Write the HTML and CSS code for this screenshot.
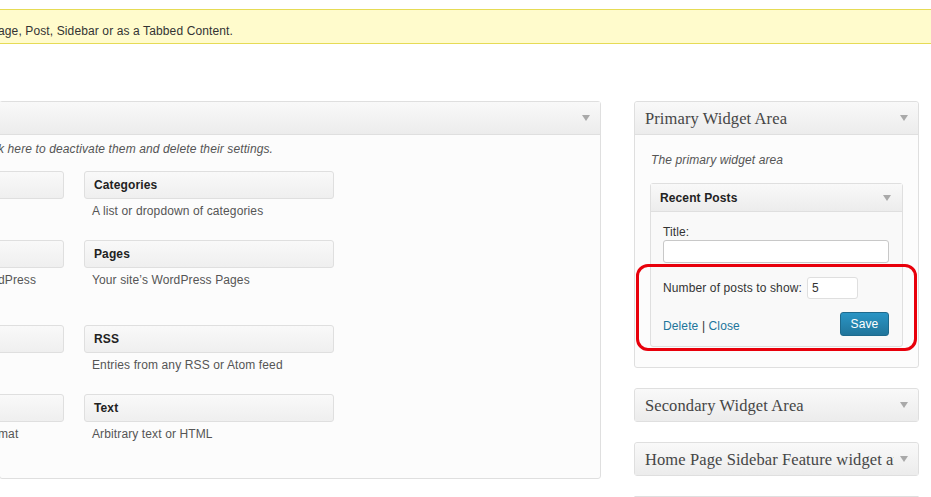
FILE: index.html
```html
<!DOCTYPE html>
<html>
<head>
<meta charset="utf-8">
<link rel="stylesheet" href="styles.css">
</head>
<body>
<div class="notice">age, Post, Sidebar or as a Tabbed Content.</div>
<div class="main">
  <div class="available">
    <div class="panel-head"><span class="arrow"></span></div>
    <div class="available-body">
      <p class="hint">k here to deactivate them and delete their settings.</p>
      <div class="widget-grid">
        <div class="item cut"><div class="wbox"></div></div>
        <div class="item"><div class="wbox">Categories</div><div class="wdesc">A list or dropdown of categories</div></div>
        <div class="item cut tall"><div class="wbox"></div><div class="wdesc">dPress</div></div>
        <div class="item tall"><div class="wbox">Pages</div><div class="wdesc">Your site’s WordPress Pages</div></div>
        <div class="item cut"><div class="wbox"></div></div>
        <div class="item"><div class="wbox">RSS</div><div class="wdesc">Entries from any RSS or Atom feed</div></div>
        <div class="item cut"><div class="wbox"></div><div class="wdesc">mat</div></div>
        <div class="item"><div class="wbox">Text</div><div class="wdesc">Arbitrary text or HTML</div></div>
      </div>
    </div>
  </div>
  <div class="sidebars">
    <div class="sidebar open">
      <div class="sidebar-head"><span class="sidebar-name">Primary Widget Area</span><span class="arrow"></span></div>
      <div class="sidebar-body">
        <p class="sidebar-desc">The primary widget area</p>
        <div class="widget">
          <div class="widget-head"><span>Recent Posts</span><span class="arrow"></span></div>
          <div class="widget-inside">
            <label class="field-label">Title:</label>
            <div class="text-input wide"></div>
            <div class="num-row">
              <span>Number of posts to show:</span>
              <div class="text-input num">5</div>
            </div>
            <div class="actions">
              <span class="links"><a>Delete</a> | <a>Close</a></span>
              <span class="save">Save</span>
            </div>
          </div>
        </div>
        <div class="highlight"></div>
      </div>
    </div>
    <div class="sidebar closed">
      <div class="sidebar-head"><span class="sidebar-name">Secondary Widget Area</span><span class="arrow"></span></div>
    </div>
    <div class="sidebar closed">
      <div class="sidebar-head"><span class="sidebar-name">Home Page Sidebar Feature widget area</span><span class="arrow"></span></div>
    </div>
    <div class="sidebar closed"></div>
  </div>
</div>
</body>
</html>
```
FILE: styles.css
```css
html, body {
  margin: 0;
  padding: 0;
  background: #fff;
}
body {
  width: 931px;
  height: 497px;
  overflow: hidden;
  font-family: "Liberation Sans", Arial, sans-serif;
  font-size: 12px;
  letter-spacing: 0.12px;
  color: #333;
}
.notice {
  margin: 9px -1px 0 -2px;
  height: 18px;
  padding: 12px 0 3px;
  line-height: 18px;
  background: #fffbcc;
  border-top: 1px solid #e6db55;
  border-bottom: 1px solid #e6db55;
  white-space: nowrap;
}
.main {
  display: flex;
  align-items: flex-start;
  margin-top: 57px;
}
.available {
  margin-left: -1px;
  width: 600px;
  border: 1px solid #dfdfdf;
  border-radius: 3px;
  background: #fcfcfc;
  flex: none;
}
.panel-head {
  height: 32px;
  border-bottom: 1px solid #dfdfdf;
  background: linear-gradient(#f9f9f9, #ececec);
  display: flex;
  align-items: center;
  justify-content: flex-end;
  padding-right: 10px;
}
.arrow {
  width: 0;
  height: 0;
  border-left: 4px solid transparent;
  border-right: 4px solid transparent;
  border-top: 6px solid #a9a9a9;
  flex: none;
}
.available-body {
  padding: 5px 0 35px;
}
.hint {
  margin: 0 0 13px -2px;
  line-height: 18px;
  font-style: italic;
  white-space: nowrap;
  color: #555;
}
.widget-grid {
  display: grid;
  grid-template-columns: 64px 250px;
  column-gap: 20px;
  row-gap: 20px;
}
.item.tall {
  margin-bottom: 16px;
}
.wbox {
  height: 26px;
  line-height: 26px;
  border: 1px solid #dfdfdf;
  border-radius: 3px;
  background: linear-gradient(#f9f9f9, #efefef);
  padding-left: 9px;
  font-weight: bold;
  color: #222;
}
.item.cut .wbox {
  margin-left: -12px;
}
.wdesc {
  margin-top: 3px;
  padding-left: 8px;
  line-height: 18px;
  color: #555;
  white-space: nowrap;
}
.item.cut .wdesc {
  padding-left: 0;
  margin-left: -2px;
}
.sidebars {
  margin-left: 33px;
  width: 285px;
  flex: none;
  display: flex;
  flex-direction: column;
  gap: 20px;
}
.sidebar {
  border: 1px solid #dfdfdf;
  border-radius: 3px;
  background: #fcfcfc;
}
.sidebar.closed {
  background: linear-gradient(#f9f9f9, #ececec);
}
.sidebar-head {
  height: 32px;
  display: flex;
  align-items: center;
  padding: 0 10px 0 10px;
  gap: 6px;
  background: linear-gradient(#f9f9f9, #ececec);
  border-radius: 3px 3px 0 0;
}
.sidebar.open .sidebar-head {
  border-bottom: 1px solid #dfdfdf;
}
.sidebar-name {
  flex: 1;
  min-width: 0;
  overflow: hidden;
  white-space: nowrap;
  font-family: "Liberation Serif", "Times New Roman", serif;
  font-size: 16.5px;
  letter-spacing: 0.1px;
  color: #464646;
  padding-top: 2px;
}
.sidebar-body {
  position: relative;
  padding: 16px 15px 20px;
}
.sidebar-desc {
  margin: 0 0 14px 1px;
  line-height: 18px;
  font-style: italic;
  color: #555;
}
.widget {
  border: 1px solid #dfdfdf;
  border-radius: 3px;
  background: #f9f9f9;
}
.widget-head {
  height: 27px;
  display: flex;
  align-items: center;
  justify-content: space-between;
  padding: 0 11px 0 9px;
  font-weight: bold;
  color: #222;
  background: linear-gradient(#f9f9f9, #ececec);
  border-bottom: 1px solid #dfdfdf;
}
.widget-inside {
  padding: 13px 12px 10px;
}
.field-label {
  display: block;
  line-height: 15px;
}
.text-input {
  box-sizing: border-box;
  border: 1px solid #c8c8c8;
  border-radius: 3px;
  background: #fff;
  color: #333;
}
.text-input.wide {
  height: 23px;
  margin-right: 1px;
}
.num-row {
  margin-top: 14px;
  display: flex;
  align-items: center;
  gap: 5px;
}
.text-input.num {
  width: 51px;
  height: 22px;
  line-height: 20px;
  padding-left: 4px;
  border-color: #dfdfdf;
}
.actions {
  margin-top: 13px;
  display: flex;
  align-items: center;
  justify-content: space-between;
}
.links {
  color: #333;
  padding-top: 3px;
}
.links a {
  color: #21759b;
}
.save {
  box-sizing: border-box;
  height: 24px;
  width: 49px;
  margin-right: 1px;
  line-height: 22px;
  text-align: center;
  color: #fff;
  border: 1px solid #1e6a8d;
  border-radius: 3px;
  background: linear-gradient(#2a95c5, #21759b);
}
.highlight {
  position: absolute;
  left: 1px;
  top: 129px;
  width: 275px;
  height: 81px;
  border: 3px solid #e8000b;
  border-radius: 12px;
  pointer-events: none;
}
```
